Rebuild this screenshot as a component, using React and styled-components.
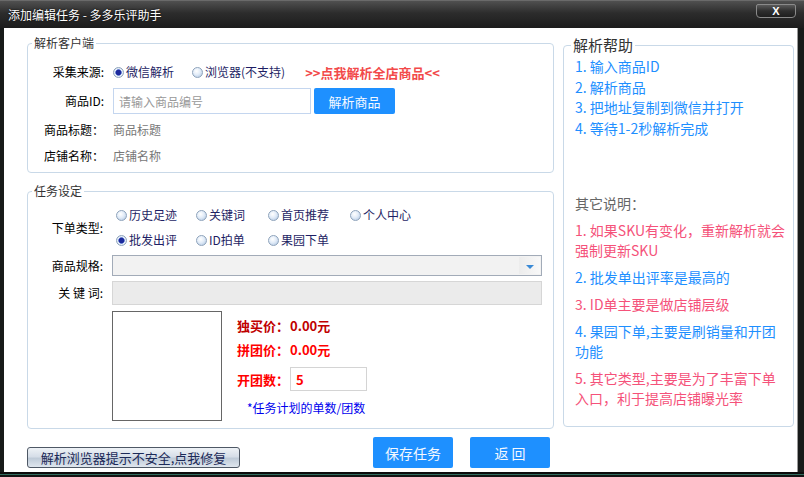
import React from 'react';
import styled, { createGlobalStyle, css } from 'styled-components';

const GlobalStyle = createGlobalStyle`
  html, body {
    margin: 0;
    padding: 0;
    background: #161616;
  }
  body {
    font-family: "Noto Sans CJK SC", "Noto Sans", sans-serif;
  }
`;

const Window = styled.div`
  width: 804px;
  height: 477px;
  display: flex;
  flex-direction: column;
  background: #171a19;
  overflow: hidden;
`;

const TitleBar = styled.div`
  height: 28px;
  flex: none;
  display: flex;
  align-items: flex-start;
  justify-content: space-between;
  padding: 0 8px;
  background: linear-gradient(#505050, #2c2c2c 45%, #1c1c1c);
  border-top: 1px solid #6a6a6a;
  box-sizing: border-box;
`;

const Title = styled.div`
  font-size: 12px;
  line-height: 28px;
  color: #fff;
  text-shadow: 0 0 2px #000;
`;

const CloseButton = styled.div`
  width: 40px;
  height: 14px;
  margin-top: 3px;
  box-sizing: border-box;
  border: 1px solid #8a8a8a;
  border-radius: 2px 2px 4px 4px;
  background: linear-gradient(#5a5a5a, #2e2e2e 50%, #1e1e1e);
  color: #fff;
  font-family: "Liberation Sans", sans-serif;
  font-weight: bold;
  font-size: 11px;
  line-height: 12px;
  text-align: center;
`;

const Client = styled.div`
  flex: 1;
  margin: 0 6px 0 4px;
  background: #fff;
  border-right: 1px solid #9a9a9a;
  display: grid;
  grid-template-columns: 527px 231px;
  column-gap: 9px;
  padding-left: 23px;
  align-items: start;
`;

const BottomFrame = styled.div`
  height: 5px;
  flex: none;
  background: linear-gradient(#0c0c0c 0 2px, #2f6b5c 2px 3px, #141414 3px);
`;

const Column = styled.div`
  display: flex;
  flex-direction: column;
`;

const Group = styled.div`
  position: relative;
  box-sizing: border-box;
  height: ${(p) => p.$h}px;
  margin-top: ${(p) => p.$mt}px;
  border: 1px solid #c9d9e8;
  border-radius: 4px;
`;

const Legend = styled.span`
  position: absolute;
  left: ${(p) => (p.$big ? 7 : 4)}px;
  top: ${(p) => (p.$big ? -11 : -9)}px;
  padding: 0 2px;
  background: #fff;
  color: #333;
  font-size: ${(p) => (p.$big ? 15 : 12)}px;
  line-height: ${(p) => (p.$big ? 20 : 16)}px;
`;

const FormGrid = styled.div`
  display: grid;
  grid-template-columns: ${(p) => p.$label}px 1fr;
  column-gap: 9px;
  row-gap: ${(p) => p.$gap}px;
  padding: ${(p) => p.$pt}px ${(p) => p.$pr}px 0 0;
  align-items: center;
`;

const Label = styled.div`
  text-align: right;
  font-size: 12px;
  line-height: 20px;
  color: #000;
  white-space: pre;
`;

const Row = styled.div`
  display: flex;
  align-items: center;
  height: ${(p) => p.$h || 20}px;
`;

const Radio = styled.label`
  display: flex;
  align-items: center;
  gap: 2px;
  width: ${(p) => (p.$w ? `${p.$w}px` : 'auto')};
  flex: none;
  font-size: 12px;
  line-height: 20px;
  color: #1e1e64;
`;

const RadioDot = styled.span`
  width: 11px;
  height: 11px;
  box-sizing: border-box;
  border-radius: 50%;
  border: 1px solid #8ea3bb;
  background: radial-gradient(circle at 40% 35%, #ffffff 0, #e2ecf8 45%, #a9c1de 100%);
  ${(p) =>
    p.$checked &&
    css`
      background: radial-gradient(circle, #1c2a9c 0 2.4px, #6a80d2 3px, #eef4fb 3.6px, #b4c9e3 100%);
    `}
`;

const HotLink = styled.span`
  margin-left: 20px;
  color: #f24a4a;
  font-weight: bold;
  font-size: 13px;
`;

const TextInput = styled.div`
  width: ${(p) => p.$w}px;
  height: ${(p) => p.$h}px;
  box-sizing: border-box;
  border: 1px solid ${(p) => p.$border || '#c4d6ef'};
  background: ${(p) => p.$bg || '#fff'};
  padding-left: 5px;
  display: flex;
  align-items: center;
  font-size: 12px;
  color: #999;
`;

const BlueButton = styled.div`
  width: ${(p) => p.$w}px;
  height: ${(p) => p.$h}px;
  margin-left: ${(p) => p.$ml || 0}px;
  border-radius: 2px;
  background: #1e90ff;
  color: #f4f8ff;
  font-size: ${(p) => p.$fs || 13}px;
  display: flex;
  align-items: center;
  justify-content: center;
  white-space: pre;
`;

const Value = styled.div`
  font-size: 12px;
  line-height: 20px;
  color: #777;
`;

const RadioGroup = styled.div`
  display: flex;
  flex-direction: column;
  gap: 5px;
  padding-left: 4px;
`;

const Select = styled.div`
  height: 21px;
  box-sizing: border-box;
  border: 1px solid #a2abb8;
  background: #f2f2f2;
  display: flex;
  justify-content: flex-end;
  padding: 1px;
`;

const SelectArrow = styled.div`
  width: 21px;
  background: linear-gradient(90deg, #ececec, #f8f8f8);
  display: flex;
  align-items: center;
  justify-content: center;
  &::after {
    content: '';
    border-left: 4px solid transparent;
    border-right: 4px solid transparent;
    border-top: 4px solid #3a8ad6;
    margin-top: 2px;
  }
`;

const MediaRow = styled.div`
  display: flex;
  margin-top: 1px;
`;

const ImageBox = styled.div`
  width: 110px;
  height: 110px;
  box-sizing: border-box;
  border: 1px solid #666;
  flex: none;
`;

const PriceColumn = styled.div`
  display: flex;
  flex-direction: column;
  margin-left: 15px;
  padding-top: 4px;
`;

const PriceRow = styled.div`
  display: flex;
  align-items: center;
  height: ${(p) => p.$h || 20}px;
  margin-top: ${(p) => p.$mt || 0}px;
  color: ${(p) => p.$color};
  font-size: 13px;
  font-weight: bold;
`;

const PriceLabel = styled.span`
  width: 53px;
`;

const CountInput = styled.div`
  width: 77px;
  height: 24px;
  box-sizing: border-box;
  border: 1px solid #d4d4d4;
  padding-left: 5px;
  display: flex;
  align-items: center;
  color: #ff0000;
  font-size: 13px;
  font-weight: bold;
`;

const Note = styled.div`
  margin: 7px 0 0 10px;
  font-size: 12px;
  line-height: 20px;
  color: #0000ee;
`;

const ButtonBar = styled.div`
  display: flex;
  align-items: flex-end;
  height: 31px;
  margin-top: 8px;
  padding-right: 4px;
`;

const FixButton = styled.div`
  width: 213px;
  height: 21px;
  box-sizing: border-box;
  border: 1px solid #4e5865;
  border-radius: 3px;
  background: linear-gradient(#eef2f6, #d6dee8 45%, #bfcbd8 55%, #dfe6ee);
  color: #1c2a58;
  font-size: 13px;
  display: flex;
  align-items: center;
  justify-content: center;
  margin-right: auto;
`;

const HelpBody = styled.div`
  padding: 10px 0 0 11px;
  font-size: 14px;
  white-space: nowrap;
`;

const HelpItem = styled.div`
  line-height: 20.5px;
  color: #1e8fff;
`;

const NoteTitle = styled.div`
  margin-top: 55px;
  line-height: 20px;
  color: #666;
`;

const HelpNote = styled.div`
  margin-top: 7px;
  line-height: 20px;
  color: ${(p) => (p.$pink ? '#f5527a' : '#1e8fff')};
`;

const helpSteps = ['1. 输入商品ID', '2. 解析商品', '3. 把地址复制到微信并打开', '4. 等待1-2秒解析完成'];

const helpNotes = [
  { pink: true, lines: ['1. 如果SKU有变化，重新解析就会', '强制更新SKU'] },
  { pink: false, lines: ['2. 批发单出评率是最高的'] },
  { pink: true, lines: ['3. ID单主要是做店铺层级'] },
  { pink: false, lines: ['4. 果园下单,主要是刷销量和开团', '功能'] },
  { pink: true, lines: ['5. 其它类型,主要是为了丰富下单', '入口，利于提高店铺曝光率'] },
];

const RadioOption = ({ checked, width, children }) => (
  <Radio $w={width}>
    <RadioDot $checked={checked} />
    {children}
  </Radio>
);

const App = () => {
  return (
    <>
      <GlobalStyle />
      <Window>
        <TitleBar>
          <Title>添加编辑任务 - 多多乐评助手</Title>
          <CloseButton>X</CloseButton>
        </TitleBar>

        <Client>
          <Column>
            <Group $h={130} $mt={15}>
              <Legend>解析客户端</Legend>
              <FormGrid $label={76} $gap={6} $pt={18} $pr={11}>
                <Label>采集来源:</Label>
                <Row>
                  <RadioOption checked width={79}>微信解析</RadioOption>
                  <RadioOption>浏览器(不支持)</RadioOption>
                  <HotLink>&gt;&gt;点我解析全店商品&lt;&lt;</HotLink>
                </Row>

                <Label>商品ID:</Label>
                <Row $h={26}>
                  <TextInput $w={198} $h={26}>请输入商品编号</TextInput>
                  <BlueButton $w={81} $h={26} $ml={3}>解析商品</BlueButton>
                </Row>

                <Label>商品标题：</Label>
                <Value>商品标题</Value>

                <Label>店铺名称：</Label>
                <Value>店铺名称</Value>
              </FormGrid>
            </Group>

            <Group $h={238} $mt={18}>
              <Legend>任务设定</Legend>
              <FormGrid $label={75} $gap={5} $pt={13} $pr={11}>
                <Label>下单类型:</Label>
                <RadioGroup>
                  <Row>
                    <RadioOption width={80}>历史足迹</RadioOption>
                    <RadioOption width={72}>关键词</RadioOption>
                    <RadioOption width={82}>首页推荐</RadioOption>
                    <RadioOption>个人中心</RadioOption>
                  </Row>
                  <Row>
                    <RadioOption checked width={80}>批发出评</RadioOption>
                    <RadioOption width={72}>ID拍单</RadioOption>
                    <RadioOption width={82}>果园下单</RadioOption>
                  </Row>
                </RadioGroup>

                <Label>商品规格:</Label>
                <Select>
                  <SelectArrow />
                </Select>

                <Label>{'关 键 词:'}</Label>
                <TextInput $h={24} $bg="#ebebeb" $border="#d6d6d6" />

                <div />
                <MediaRow>
                  <ImageBox />
                  <PriceColumn>
                    <PriceRow $color="#c00000">
                      <PriceLabel>独买价：</PriceLabel>
                      0.00元
                    </PriceRow>
                    <PriceRow $color="#ff0000" $mt={4}>
                      <PriceLabel>拼团价：</PriceLabel>
                      0.00元
                    </PriceRow>
                    <PriceRow $color="#ff0000" $mt={8} $h={24}>
                      <PriceLabel>开团数：</PriceLabel>
                      <CountInput>5</CountInput>
                    </PriceRow>
                    <Note>*任务计划的单数/团数</Note>
                  </PriceColumn>
                </MediaRow>
              </FormGrid>
            </Group>

            <ButtonBar>
              <FixButton>解析浏览器提示不安全,点我修复</FixButton>
              <BlueButton $w={80} $h={31} $fs={14}>保存任务</BlueButton>
              <BlueButton $w={80} $h={31} $fs={14} $ml={17}>{'返 回'}</BlueButton>
            </ButtonBar>
          </Column>

          <Group $h={382} $mt={17}>
            <Legend $big>解析帮助</Legend>
            <HelpBody>
              {helpSteps.map((step) => (
                <HelpItem key={step}>{step}</HelpItem>
              ))}
              <NoteTitle>其它说明：</NoteTitle>
              {helpNotes.map((note) => (
                <HelpNote key={note.lines[0]} $pink={note.pink}>
                  {note.lines.map((line) => (
                    <div key={line}>{line}</div>
                  ))}
                </HelpNote>
              ))}
            </HelpBody>
          </Group>
        </Client>

        <BottomFrame />
      </Window>
    </>
  );
};

export default App;
